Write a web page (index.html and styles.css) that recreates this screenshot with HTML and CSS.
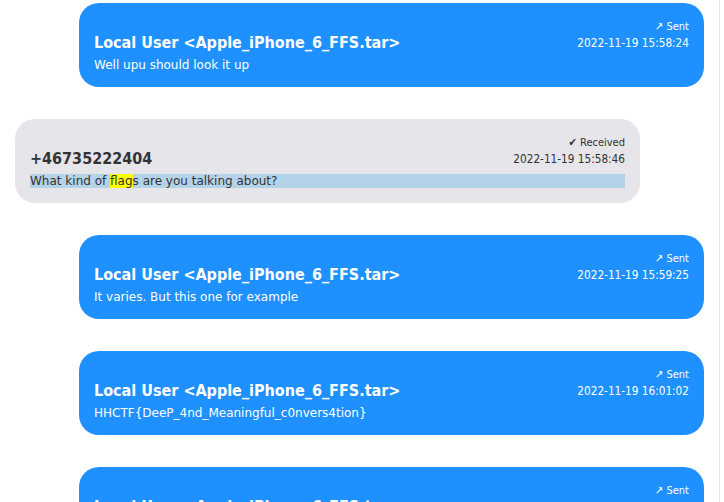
FILE: index.html
```html
<!DOCTYPE html>
<html>
<head>
<meta charset="utf-8">
<link rel="stylesheet" href="styles.css">
</head>
<body>
<div class="page">
  <div class="chat">
    <div class="msg sent">
      <div class="meta">↗ Sent</div>
      <div class="head"><span class="who">Local User &lt;Apple_iPhone_6_FFS.tar&gt;</span><span class="time">2022-11-19 15:58:24</span></div>
      <div class="text">Well upu should look it up</div>
    </div>
    <div class="msg recv">
      <div class="meta">✔ Received</div>
      <div class="head"><span class="who">+46735222404</span><span class="time">2022-11-19 15:58:46</span></div>
      <div class="text hl">What kind of <mark class="hit">flag</mark>s are you talking about?</div>
    </div>
    <div class="msg sent">
      <div class="meta">↗ Sent</div>
      <div class="head"><span class="who">Local User &lt;Apple_iPhone_6_FFS.tar&gt;</span><span class="time">2022-11-19 15:59:25</span></div>
      <div class="text">It varies. But this one for example</div>
    </div>
    <div class="msg sent">
      <div class="meta">↗ Sent</div>
      <div class="head"><span class="who">Local User &lt;Apple_iPhone_6_FFS.tar&gt;</span><span class="time">2022-11-19 16:01:02</span></div>
      <div class="text">HHCTF{DeeP_4nd_Meaningful_c0nvers4tion}</div>
    </div>
    <div class="msg sent">
      <div class="meta">↗ Sent</div>
      <div class="head"><span class="who">Local User &lt;Apple_iPhone_6_FFS.tar&gt;</span><span class="time">2022-11-19 16:05:10</span></div>
      <div class="text">…</div>
    </div>
  </div>
</div>
</body>
</html>
```
FILE: styles.css
```css
html, body {
  margin: 0;
  padding: 0;
  background: #fff;
  overflow: hidden;
}
.page {
  width: 719px;
  height: 502px;
  border-right: 1px solid #e6e6e6;
  overflow: hidden;
}
.chat {
  padding: 3px 15px 0 15px;
  display: flex;
  flex-direction: column;
  gap: 32px;
}
.msg {
  width: 625px;
  box-sizing: border-box;
  padding: 16px 15px 15px;
  border-radius: 20px;
  font-family: "DejaVu Sans Condensed", "DejaVu Sans", sans-serif;
}
.sent {
  align-self: flex-end;
  background: #1e90ff;
  color: #fff;
}
.recv {
  align-self: flex-start;
  background: #e5e5ea;
  color: #333;
}
.meta {
  text-align: right;
  font-size: 11px;
  line-height: 15px;
}
.head {
  display: flex;
  justify-content: space-between;
  align-items: center;
  height: 18px;
}
.who {
  font-weight: bold;
  font-size: 16px;
  line-height: 18px;
}
.time {
  font-size: 11.7px;
  line-height: 14px;
}
.text {
  margin-top: 6px;
  font-family: "DejaVu Sans", sans-serif;
  font-size: 12px;
  line-height: 14px;
}
.hl {
  background: #b3d4e8;
}
.hit {
  background: #ffff00;
  color: inherit;
}
```
